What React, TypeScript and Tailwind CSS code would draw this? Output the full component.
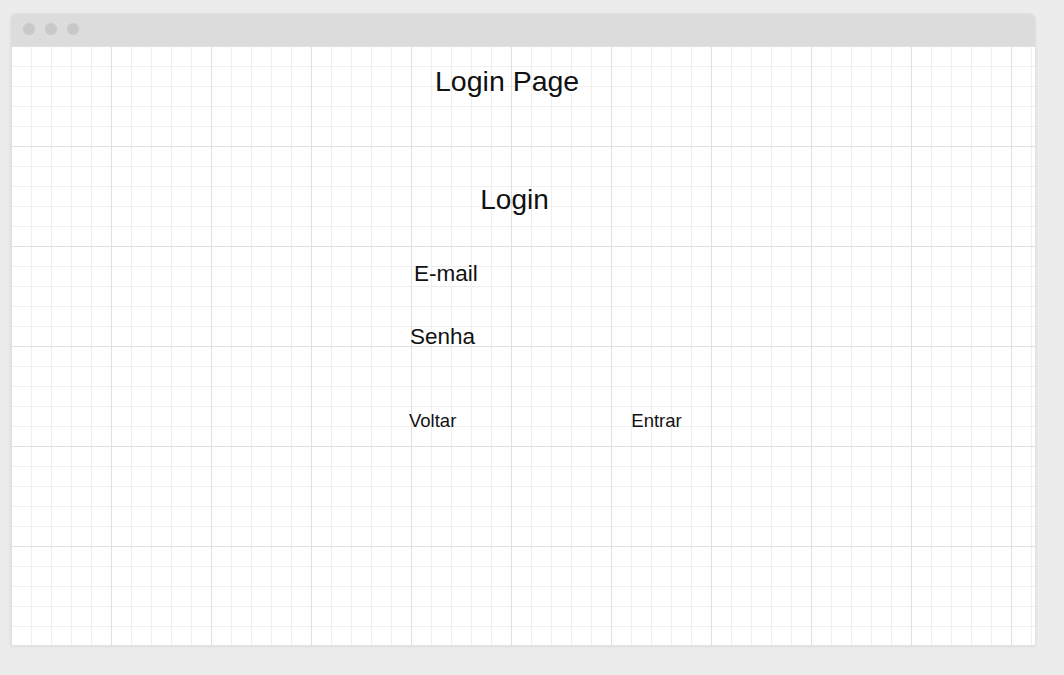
import React from 'react';

const App: React.FC = () => {
  return (
    <div className="w-[1064px] h-[675px] bg-[#ececec] pt-[13px] pl-[10px] font-['Liberation_Sans',Arial,sans-serif] text-[#111]">
      <div className="w-[1026px] h-[633px] flex flex-col rounded-t-[6px] overflow-hidden border border-[#e2e2e2] shadow-[0_1px_3px_rgba(0,0,0,0.06)]">
        {/* title bar */}
        <div className="h-[32px] shrink-0 bg-[#dcdcdc] flex items-center gap-[10px] pl-[12px] pb-[2px]">
          <span className="w-[12px] h-[12px] rounded-full bg-[#c8c8c8]" />
          <span className="w-[12px] h-[12px] rounded-full bg-[#c8c8c8]" />
          <span className="w-[12px] h-[12px] rounded-full bg-[#c8c8c8]" />
        </div>

        {/* canvas */}
        <div className="flex-1 bg-white bg-[image:linear-gradient(to_right,#e0e0e0_1px,transparent_1px),linear-gradient(to_bottom,#e0e0e0_1px,transparent_1px),linear-gradient(to_right,#efefef_1px,transparent_1px),linear-gradient(to_bottom,#efefef_1px,transparent_1px)] bg-[size:100px_100px,100px_100px,20px_20px,20px_20px] flex flex-col items-start">
          <h1 className="ml-[424px] mt-[19px] text-[28.5px] leading-[32px] font-normal">Login Page</h1>

          <form className="ml-[398px] mt-[87px] w-[211px] flex flex-col">
            <h2 className="text-center text-[28px] leading-[32px] font-normal">Login</h2>
            <label className="mt-[45px] ml-[5px] text-[22.5px] leading-[25px]">E-mail</label>
            <label className="mt-[38px] ml-[1px] text-[22.5px] leading-[25px]">Senha</label>
            <div className="mt-[61px] flex items-center gap-[175px] text-[18.5px] leading-[21px] whitespace-nowrap">
              <button type="button">Voltar</button>
              <button type="submit">Entrar</button>
            </div>
          </form>
        </div>
      </div>
    </div>
  );
};

export default App;
